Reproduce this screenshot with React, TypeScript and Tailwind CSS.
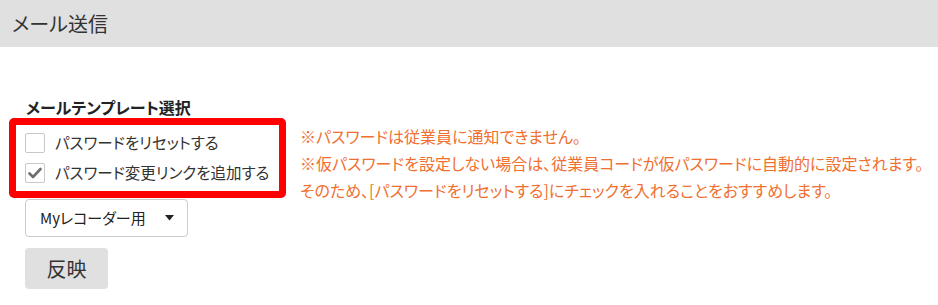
import React from "react";

const font = "font-['Noto_Sans_CJK_JP','Noto_Sans',sans-serif] [font-feature-settings:'palt']";

function Check({ checked }: { checked?: boolean }) {
  return (
    <span className="flex h-[20px] w-[20px] shrink-0 items-center justify-center rounded-[2px] border border-[#c8c8c8] bg-white">
      {checked && (
        <svg width="14" height="12" viewBox="0 0 14 12">
          <path d="M1.5 6.5 L5 10 L12.5 2" fill="none" stroke="#707070" strokeWidth="2.6" strokeLinecap="round" strokeLinejoin="round" />
        </svg>
      )}
    </span>
  );
}

export default function App() {
  return (
    <div className={`h-[305px] w-[938px] bg-white text-[#333] ${font}`}>
      <div className="flex h-[47px] items-center bg-[#e0e0e0] pl-[12px] text-[20px] leading-none text-[#333]">
        メール送信
      </div>
      <div className="pl-[9px] pt-[49px]">
        <div className="pl-[17px] text-[16px] font-bold leading-[22px] text-[#222]">メールテンプレート選択</div>
        <div className="flex h-[80px] items-start">
          <div className="h-[80px] w-[277px] shrink-0 rounded-[5px] border-[7px] border-[#ff0000] px-[9px] py-[3px]">
            <label className="flex h-[30px] items-center gap-[10px] whitespace-nowrap text-[15.5px] text-[#333]">
              <Check />
              <span>パスワードをリセットする</span>
            </label>
            <label className="flex h-[30px] items-center gap-[10px] whitespace-nowrap text-[15.5px] text-[#333]">
              <Check checked />
              <span>パスワード変更リンクを追加する</span>
            </label>
          </div>
          <div className="ml-[14px] mt-[5px] whitespace-nowrap text-[16px] leading-[27px] text-[#f07030]">
            <p>※パスワードは従業員に通知できません。</p>
            <p>※仮パスワードを設定しない場合は、従業員コードが仮パスワードに自動的に設定されます。</p>
            <p>そのため、[パスワードをリセットする]にチェックを入れることをおすすめします。</p>
          </div>
        </div>
        <div className="pl-[16px]">
          <div className="mt-[1px] flex h-[38px] w-[163px] items-center justify-between rounded-[4px] border border-[#cccccc] bg-white pl-[14px] pr-[13px] text-[15px] text-[#222]">
            <span>Myレコーダー用</span>
            <svg width="9" height="6" viewBox="0 0 9 6">
              <path d="M0 0 H9 L4.5 5.5 Z" fill="#222" />
            </svg>
          </div>
          <button className="mt-[11px] flex h-[41px] w-[83px] items-center justify-center rounded-[4px] bg-[#e0e0e0] text-[20px] text-[#333]">
            反映
          </button>
        </div>
      </div>
    </div>
  );
}
